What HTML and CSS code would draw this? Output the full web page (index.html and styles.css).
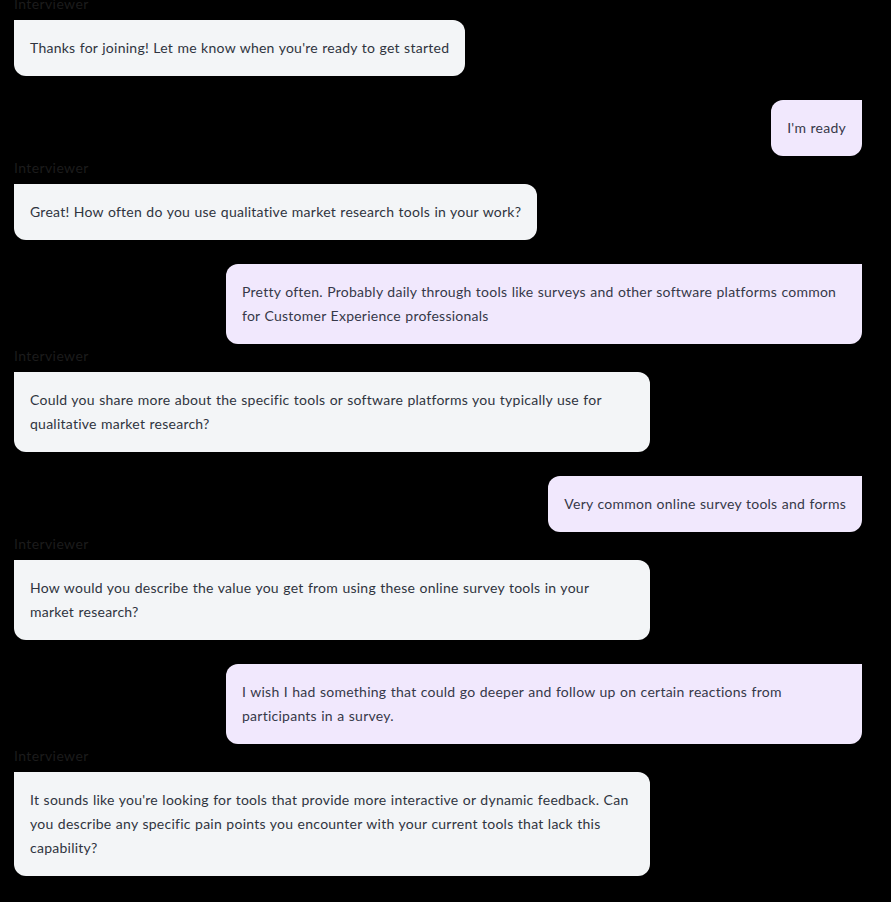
FILE: index.html
```html
<!DOCTYPE html>
<html lang="en">
<head>
<meta charset="utf-8">
<title>Interview</title>
<link rel="stylesheet" href="styles.css">
</head>
<body>
<div class="chat">
  <div class="msg msg-ai">
    <div class="label">Interviewer</div>
    <div class="bubble bubble-ai">Thanks for joining! Let me know when you're ready to get started</div>
  </div>
  <div class="msg msg-user">
    <div class="bubble bubble-user">I'm ready</div>
  </div>
  <div class="msg msg-ai">
    <div class="label">Interviewer</div>
    <div class="bubble bubble-ai">Great! How often do you use qualitative market research tools in your work?</div>
  </div>
  <div class="msg msg-user">
    <div class="bubble bubble-user">Pretty often. Probably daily through tools like surveys and other software platforms common for Customer Experience professionals</div>
  </div>
  <div class="msg msg-ai">
    <div class="label">Interviewer</div>
    <div class="bubble bubble-ai">Could you share more about the specific tools or software platforms you typically use for qualitative market research?</div>
  </div>
  <div class="msg msg-user">
    <div class="bubble bubble-user">Very common online survey tools and forms</div>
  </div>
  <div class="msg msg-ai">
    <div class="label">Interviewer</div>
    <div class="bubble bubble-ai">How would you describe the value you get from using these online survey tools in your market research?</div>
  </div>
  <div class="msg msg-user">
    <div class="bubble bubble-user">I wish I had something that could go deeper and follow up on certain reactions from participants in a survey.</div>
  </div>
  <div class="msg msg-ai">
    <div class="label">Interviewer</div>
    <div class="bubble bubble-ai">It sounds like you're looking for tools that provide more interactive or dynamic feedback. Can you describe any specific pain points you encounter with your current tools that lack this capability?</div>
  </div>
</div>
</body>
</html>
```
FILE: styles.css
```css
html, body {
  margin: 0;
  padding: 0;
  background: #000;
  height: 100%;
  overflow: hidden;
}
body {
  font-family: Lato, "Open Sans", sans-serif;
  font-size: 14px;
  letter-spacing: 0.25px;
  word-spacing: 0.5px;
  color: #2f3440;
}
.chat {
  display: flex;
  flex-direction: column;
  padding: 0 29px 0 14px;
  margin-top: -8px;
}
.msg {
  display: flex;
  flex-direction: column;
}
.msg-ai {
  align-items: flex-start;
  margin-bottom: 24px;
}
.msg-user {
  align-items: flex-end;
}
.label {
  color: #1c1c1c;
  font-size: 14px;
  line-height: 20px;
  letter-spacing: 0.4px;
  margin-top: 2px;
  margin-bottom: 6px;
}
.bubble {
  max-width: 636px;
  box-sizing: border-box;
  padding: 16px;
  line-height: 24px;
  border-radius: 12px;
}
.bubble-ai {
  background: #f3f5f7;
  border-top-left-radius: 0;
}
.bubble-user {
  background: #f1e8fd;
  border-top-right-radius: 0;
  color: #363849;
}
```
